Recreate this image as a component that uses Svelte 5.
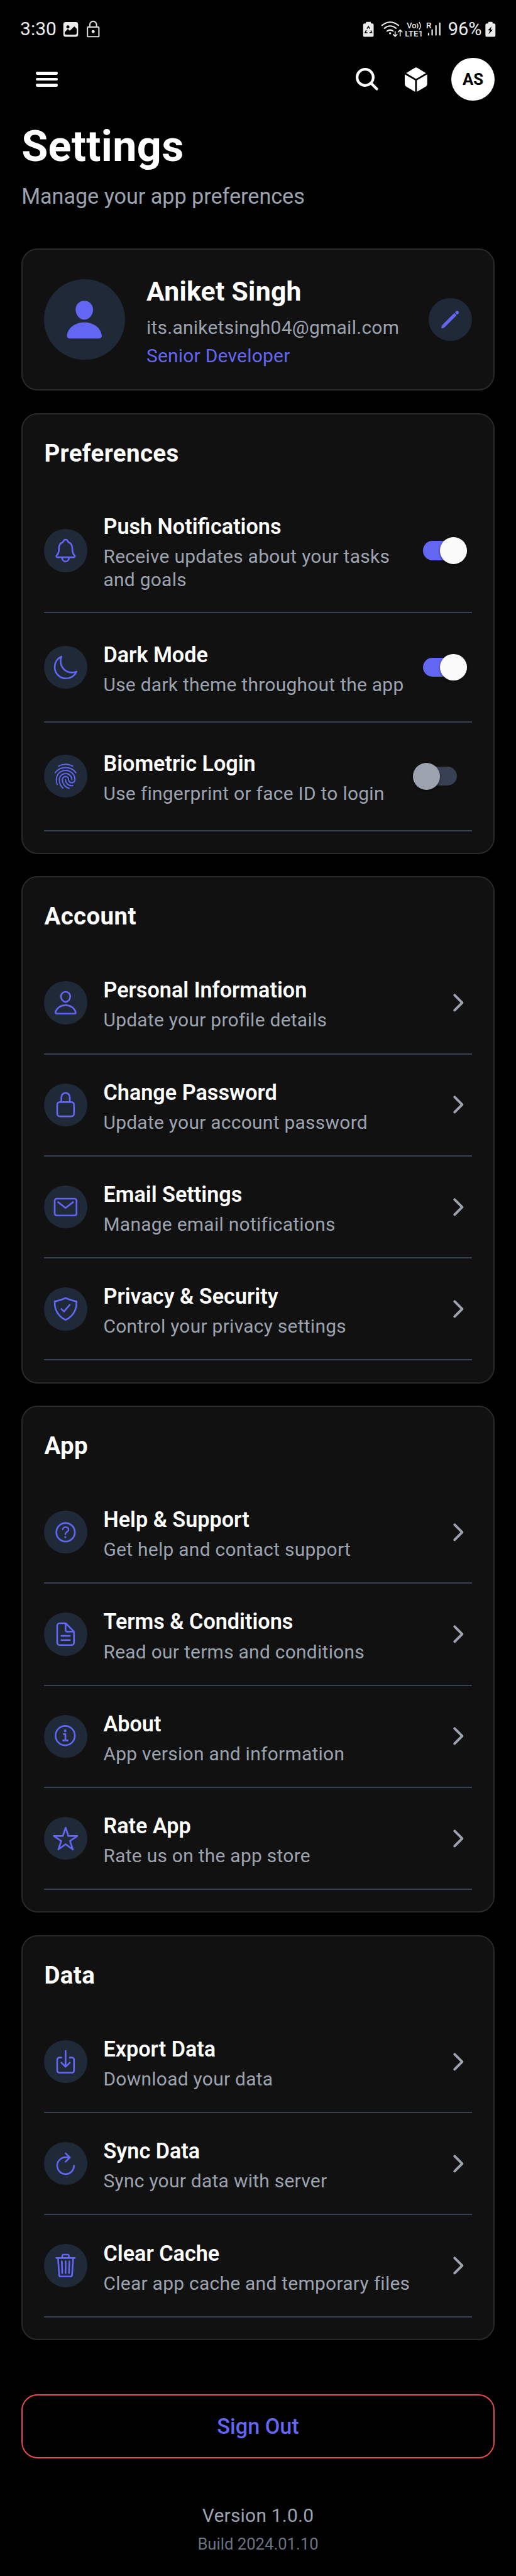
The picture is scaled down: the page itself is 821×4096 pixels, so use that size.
<script>
  const person =
    '<path d="M344 144c-3.92 52.87-44 96-88 96s-84.15-43.12-88-96c-4-55 35-96 88-96s92 42 88 96z"/><path d="M256 304c-87 0-175.3 48-191.64 138.6C62.39 453.52 68.57 464 80 464h352c11.44 0 17.62-10.48 15.65-21.4C431.3 352 343 304 256 304z"/>';
  const icons = {
    bell: '<path d="M427.68 351.43C402 320 383.87 304 383.87 217.35 383.87 138 343.35 109.73 310 96c-4.43-1.82-8.6-6-9.95-10.55C294.2 65.54 277.8 48 256 48s-38.21 17.55-44 37.47c-1.35 4.6-5.52 8.71-9.95 10.53-33.39 13.75-73.87 41.92-73.87 121.35C128.13 304 110 320 84.32 351.43 73.68 364.45 83 384 101.61 384h308.88c18.51 0 27.77-19.61 17.19-32.57zM320 384v16a64 64 0 01-128 0v-16"/>',
    moon: '<path d="M160 136c0-30.62 4.51-61.61 16-88C99.57 81.27 48 159.32 48 248c0 119.29 96.71 216 216 216 88.68 0 166.73-51.57 200-128-26.39 11.49-57.38 16-88 16-119.29 0-216-96.71-216-216z"/>',
    finger:
      '<path fill="currentColor" stroke="none" d="M390.42 75.28a10.45 10.45 0 01-5.32-1.44C340.72 50.08 302.35 40 256.35 40c-45.77 0-89.23 11.28-128.76 33.84C122 77 115.11 74.8 111.87 69a12.4 12.4 0 014.63-16.32A281.81 281.81 0 01256.35 16c49.23 0 92.23 11.28 139.39 36.48a12 12 0 014.85 16.08 11.3 11.3 0 01-10.17 6.72zM59.63 201.28a11.73 11.73 0 01-6.7-2.16 12.26 12.26 0 01-2.78-16.8c22.89-33 52-58.8 86.79-76.92C209.42 68 302.6 67.88 375.29 105.16c34.79 17.88 63.9 43.44 86.78 76.2a12.11 12.11 0 01-2.77 16.8 11.33 11.33 0 01-16.41-2.88c-20.8-29.64-47.15-52.8-78.57-68.88-66.28-34-151.02-34-217.19.24-31.54 16.32-57.89 39.6-78.69 69.24a10.61 10.61 0 01-8.81 5.4zM204.1 491a10.66 10.66 0 01-8.09-3.6C175.9 466.48 165 453 149.55 424c-16-29.52-24.27-65.52-24.27-104.16 0-71.28 59-129.36 131.53-129.36s131.53 58.08 131.53 129.36a11.56 11.56 0 11-23.11 0c0-58.08-48.6-105.36-108.42-105.36S148.39 261.76 148.39 319.84c0 34.56 7.28 66.48 21.14 92.16 14.38 26.88 24.67 38.6 42.78 57.56a12.49 12.49 0 010 17 11.57 11.57 0 01-8.21 4.44zM369.8 446.6c-27.51 0-51.78-7.2-71.66-21.36-34.44-24.08-55.02-63.56-55.02-105.44a11.56 11.56 0 1123.11 0c0 33.84 16.41 65.76 43.92 85.2 16 11.4 34.79 16.92 57.45 16.92a132 132 0 0024.15-2.4c6.24-1.2 12.25 3.12 13.4 9.72a11.9 11.9 0 01-9.36 13.92 144 144 0 01-25.99 3.44zM323.38 496a13 13 0 01-3-.36C283.31 485 259.16 471 234 445.2c-32.48-33.48-50.27-78-50.27-125.4 0-38.76 31.67-70.32 70.74-70.32s70.74 31.56 70.74 70.32c0 25.56 22 46.32 49.12 46.32s49.13-20.76 49.13-46.32c0-90-74.67-163.2-166.56-163.2-65.3 0-125 37.68-151.87 96.12-9 19.44-13.64 42.12-13.64 67.08 0 18.72 1.62 48.12 15.49 86.64a12.07 12.07 0 01-6.94 15.48 11.5 11.5 0 01-14.79-7.32 270 270 0 01-17-94.8c0-28.44 5.2-54.24 15.37-76.8 30.75-66.84 98.94-110.16 173.37-110.16 104.6 0 189.67 83.88 189.67 187.08 0 38.76-32.6 70.32-72.35 70.32S302 358.68 302 319.92c0-25.56-21.27-46.32-47.63-46.32S206.8 294.36 206.8 319.92c0 41 15.26 79.32 43.23 108.12 22 22.56 43 35 75.59 44.28a12.06 12.06 0 018.09 14.64 11.36 11.36 0 01-10.33 9.04z"/>',
    person,
    lock: '<path d="M336 208v-95a80 80 0 00-160 0v95"/><rect x="96" y="208" width="320" height="272" rx="48"/>',
    mail: '<rect x="48" y="96" width="416" height="320" rx="40"/><path d="M112 160l144 112 144-112"/>',
    shield:
      '<path d="M336 176L225.2 304 176 255.8M463.1 112.37C373.68 96.33 336.71 84.45 256 48c-80.71 36.45-117.68 48.33-207.1 64.37C32.7 369.13 240.58 457.79 256 464c15.42-6.21 223.3-94.87 207.1-351.63z"/>',
    help: '<circle cx="256" cy="256" r="176"/><path stroke-width="28" d="M200 202.29s.84-17.5 19.57-32.57C230.68 160.77 244 158.18 256 158c10.93-.14 20.69 1.67 26.53 4.45 10 4.76 29.47 16.38 29.47 41.09 0 26-17 37.81-36.37 50.8S251 281.43 251 296"/><circle cx="250" cy="348" r="20" fill="currentColor" stroke="none"/>',
    document:
      '<path d="M416 221.25V416a48 48 0 01-48 48H144a48 48 0 01-48-48V96a48 48 0 0148-48h98.75a32 32 0 0122.62 9.37l141.26 141.26a32 32 0 019.37 22.62z"/><path d="M256 56v120a32 32 0 0032 32h120M176 288h160M176 368h160"/>',
    info: '<circle cx="248" cy="248" r="184"/><path d="M220 220h32v116M208 340h88"/><circle cx="248" cy="156" r="26" fill="currentColor" stroke="none"/>',
    star: '<path d="M480 208H308L256 48l-52 160H32l140 96-54 160 138-100 138 100-54-160z"/>',
    download:
      '<path d="M336 176h40a40 40 0 0140 40v208a40 40 0 01-40 40H136a40 40 0 01-40-40V216a40 40 0 0140-40h40M176 272l80 80 80-80M256 48v288"/>',
    refresh: '<path d="M320 146s24.36-12-64-12a160 160 0 10160 160M256 58l80 80-80 80"/>',
    trash:
      '<path d="M112 112l20 320c.95 18.49 14.4 32 32 32h184c17.67 0 30.87-13.51 32-32l20-320M80 112h352M192 112V72a23.93 23.93 0 0124-24h80a23.93 23.93 0 0124 24v40M256 176v224M184 176l8 224M328 176l-8 224"/>'
  };

  let preferences = $state([
    { icon: 'bell', title: 'Push Notifications', text: 'Receive updates about your tasks\nand goals', on: true },
    { icon: 'moon', title: 'Dark Mode', text: 'Use dark theme throughout the app', on: true },
    { icon: 'finger', title: 'Biometric Login', text: 'Use fingerprint or face ID to login', on: false }
  ]);

  const sections = [
    {
      name: 'Account',
      rows: [
        { icon: 'person', title: 'Personal Information', text: 'Update your profile details' },
        { icon: 'lock', title: 'Change Password', text: 'Update your account password' },
        { icon: 'mail', title: 'Email Settings', text: 'Manage email notifications' },
        { icon: 'shield', title: 'Privacy & Security', text: 'Control your privacy settings' }
      ]
    },
    {
      name: 'App',
      rows: [
        { icon: 'help', title: 'Help & Support', text: 'Get help and contact support' },
        { icon: 'document', title: 'Terms & Conditions', text: 'Read our terms and conditions' },
        { icon: 'info', title: 'About', text: 'App version and information' },
        { icon: 'star', title: 'Rate App', text: 'Rate us on the app store' }
      ]
    },
    {
      name: 'Data',
      rows: [
        { icon: 'download', title: 'Export Data', text: 'Download your data' },
        { icon: 'refresh', title: 'Sync Data', text: 'Sync your data with server' },
        { icon: 'trash', title: 'Clear Cache', text: 'Clear app cache and temporary files' }
      ]
    }
  ];
</script>

{#snippet rowLead(row)}
  <span class="badge">
    <svg class="outline" viewBox="0 0 512 512">{@html icons[row.icon]}</svg>
  </span>
  <div class="copy">
    <div class="row-title">{row.title}</div>
    <div class="row-text">{row.text}</div>
  </div>
{/snippet}

<div class="page">
  <div class="status">
    <span class="clock">3:30</span>
    <svg class="s-left" viewBox="132 42 78 38">
      <rect x="133" y="46" width="31" height="31" rx="5" fill="#ececec" />
      <circle cx="142.6" cy="56" r="3.3" fill="#000" />
      <path d="M136 71v-4l6.5-6.5 4 4 9.500-9.500 5 5v8.500q0 4-4 4h-17q-4 0-4-1.500z" fill="#000" />
      <rect x="183.500" y="56.500" width="24" height="20" rx="1" fill="none" stroke="#d8d8d8" stroke-width="2.800" />
      <path d="M188.500 56v-4.500a7 7 0 0114 0V56" fill="none" stroke="#d8d8d8" stroke-width="2.800" />
      <circle cx="195.500" cy="66" r="3.200" fill="#ececec" />
    </svg>
    <svg class="s-right" viewBox="760 42 280 38">
      <g fill="#ececec">
        <path d="M768 45.500h8a1 1 0 011 1V49h2.500a3.500 3.500 0 013.500 3.500v21a3.500 3.500 0 01-3.500 3.500h-15a3.500 3.500 0 01-3.500-3.500v-21A3.500 3.500 0 01764.500 49h2.500v-2.500a1 1 0 011-1z" />
        <path d="M1024 45.500h7a1 1 0 011 1V49h2.500a3.500 3.500 0 013.500 3.500v21a3.500 3.500 0 01-3.500 3.500h-14a3.500 3.500 0 01-3.500-3.500v-21a3.500 3.500 0 013.500-3.500h2.500v-2.500a1 1 0 011-1z" />
        <circle cx="817.500" cy="69.500" r="2.200" />
      </g>
      <path d="M1030 55l-8 8.500h4.500l-3 8 9-9.500h-4.500z" fill="#000" />
      <g fill="none" stroke="#111" stroke-width="2.100">
        <path d="M769 60l3-4.500 3 4.500M777 63.500l2 4.500h-4.500M770 68.500h-5l2.500-5.500" />
      </g>
      <g fill="none" stroke="#ececec" stroke-linecap="round">
        <path stroke-width="2.700" d="M800.500 53q17-13.500 34.500 0M805.500 59q12-9.500 24.500 0M811 65q6.500-5 13 0" />
        <path stroke-width="2.200" d="M828 66v9.500M824 72l4 4 4-4M838.500 75v-12M834.500 66.500l4-4 4 4" />
        <path stroke-width="1.900" d="M874 49.500q3.500 4.500 0 9.500M878.500 47q5.500 7 0 14" />
        <path stroke-width="2.900" d="M898 70v3M905.500 62.500v10.500M913.500 54v19M921.500 48.500v24.500" />
      </g>
      <g class="s-text">
        <text x="852.500" y="59" font-size="16.500" textLength="20" lengthAdjust="spacingAndGlyphs">Vo</text>
        <text x="848.500" y="75.800" font-size="17.500" textLength="38" lengthAdjust="spacingAndGlyphs">LTE1</text>
        <text x="892.800" y="58.800" font-size="18">R</text>
        <text class="pct" x="938.500" y="73.800" font-size="38.500" textLength="71" lengthAdjust="spacingAndGlyphs">96%</text>
      </g>
    </svg>
  </div>

  <header>
    <button class="menu" aria-label="Menu"><i></i><i></i><i></i></button>
    <svg class="search" viewBox="48 48 416 416">
      <path d="M456.690 421.390L362.600 327.300a173.810 173.810 0 0034.840-104.580C397.440 126.380 319.060 48 222.720 48S48 126.380 48 222.720s78.380 174.720 174.720 174.720A173.810 173.810 0 00327.300 362.600l94.090 94.090a25 25 0 0035.300-35.300zM97.920 222.720a124.800 124.800 0 11124.800 124.800 124.950 124.950 0 01-124.800-124.800z" />
    </svg>
    <svg class="cube" viewBox="444 360 141 154">
      <path d="M508 362.500q7-3 14 0L577 396.500 515 433 453 396.500zM444 404l65 38v71.500L452 480q-8-5-8-13zM585 404l-65 38v71.500L577 480q8-5 8-13z" />
    </svg>
    <div class="initials">AS</div>
  </header>

  <h1>Settings</h1>
  <p class="lead">Manage your app preferences</p>

  <main>
    <section class="card profile">
      <div class="avatar">
        <svg viewBox="0 0 512 512"><path d="M332.640 64.580C313.180 43.570 286 32 256 32c-30.160 0-57.430 11.500-76.800 32.380-19.580 21.110-29.120 49.800-26.880 80.780C156.760 206.280 203.270 256 256 256s99.160-49.710 103.670-110.820c2.270-30.700-7.330-59.330-27.030-80.600zM432 480H80a31 31 0 01-24.200-11.130c-6.500-7.770-9.120-18.380-7.180-29.110C57.060 392.940 83.400 353.610 124.800 326c36.780-24.510 83.370-38 131.200-38s94.420 13.500 131.200 38c41.400 27.600 67.740 66.930 76.180 113.750 1.940 10.730-.68 21.340-7.180 29.110A31 31 0 01432 480z" /></svg>
      </div>
      <div class="who">
        <div class="name">Aniket Singh</div>
        <div class="mail">its.aniketsingh04@gmail.com</div>
        <div class="role">Senior Developer</div>
      </div>
      <button class="badge edit" aria-label="Edit profile">
        <svg class="outline" viewBox="0 0 512 512"><path d="M358.620 129.280L86.490 402.080 70 442l39.920-16.490 272.800-272.130-24.100-24.100zM413.070 74.840l-11.790 11.780 24.100 24.100 11.790-11.790a16.510 16.510 0 000-23.340l-.75-.75a16.510 16.510 0 00-23.350 0z" /></svg>
      </button>
    </section>

    <section class="card">
      <h2>Preferences</h2>
      {#each preferences as row}
        <div class="row pref" class:tall={row.text.includes('\n')}>
          {@render rowLead(row)}
          <button class="switch" class:on={row.on} role="switch" aria-checked={row.on} aria-label={row.title} onclick={() => (row.on = !row.on)}><i></i></button>
        </div>
      {/each}
    </section>

    {#each sections as section}
      <section class="card">
        <h2>{section.name}</h2>
        {#each section.rows as row}
          <div class="row">
            {@render rowLead(row)}
            <svg class="chevron" viewBox="0 0 512 512"><path d="M184 112l144 144-144 144" /></svg>
          </div>
        {/each}
      </section>
    {/each}
  </main>

  <button class="signout">Sign Out</button>
  <footer>
    <div class="version">Version 1.0.0</div>
    <div class="build">Build 2024.01.10</div>
  </footer>
</div>

<style>
  /* 1rem is ten units of a 384-unit wide screen */
  :global(html) {
    font-size: 21.38px;
  }
  :global(body) {
    background: #000;
    margin: 0;
  }
  .page {
    box-sizing: border-box;
    width: 100%;
    height: 4096px;
    overflow: hidden;
    background: #000;
    color: #fff;
    font-family: Roboto, sans-serif;
    padding: 0 1.6rem;
    display: flex;
    flex-direction: column;
  }
  .page > * {
    flex: none;
  }
  button {
    font: inherit;
    border: 0;
    padding: 0;
    background: none;
    color: inherit;
  }
  svg {
    display: block;
    flex: none;
    overflow: visible;
  }
  .status {
    display: flex;
    align-items: center;
    height: 1.352rem;
    margin: 1.493rem -0.16rem 0 -0.1rem;
    color: #ececec;
  }
  .clock {
    font-size: 1.4rem;
    line-height: 1.352rem;
    width: 3.19rem;
    white-space: nowrap;
  }
  .s-left {
    width: 2.773rem;
    height: 1.351rem;
  }
  .s-right {
    width: 9.956rem;
    height: 1.351rem;
    margin-left: auto;
  }
  .s-text {
    fill: #ececec;
    font-family: Roboto, sans-serif;
    font-weight: 500;
  }
  .pct {
    font-weight: 400;
  }
  header {
    display: flex;
    align-items: center;
    height: 3.2rem;
    margin-top: 1.457rem;
    padding-left: 1.05rem;
  }
  .menu {
    width: 1.67rem;
    display: flex;
    flex-direction: column;
    gap: 0.237rem;
    margin-right: auto;
  }
  .menu i {
    height: 0.213rem;
    border-radius: 0.1rem;
    background: #fff;
  }
  .search {
    width: 1.671rem;
    height: 1.671rem;
    fill: #fff;
  }
  .cube {
    width: 1.671rem;
    height: 1.825rem;
    margin: 0 1.813rem 0 1.955rem;
    fill: #fff;
  }
  .initials {
    width: 3.2rem;
    height: 3.2rem;
    border-radius: 50%;
    background: #fff;
    color: #000;
    font-size: 1.2rem;
    font-weight: 700;
    line-height: 3.25rem;
    text-align: center;
  }
  h1 {
    margin: 1.53rem 0 0;
    font-size: 3.2rem;
    line-height: 3.8rem;
    font-weight: 700;
    letter-spacing: 0.3px;
  }
  .lead {
    margin: 0.79rem 0 0;
    font-size: 1.6rem;
    line-height: 2rem;
    letter-spacing: -0.04px;
    color: #9ca3af;
  }
  main {
    display: flex;
    flex-direction: column;
    gap: 1.66rem;
    margin-top: 2.87rem;
  }
  .card {
    box-sizing: border-box;
    border: 0.1rem solid #2a2a2a;
    border-radius: 1.2rem;
    background: #111;
    padding: 1.78rem 1.6rem 1.6rem;
  }
  .profile {
    display: flex;
    align-items: center;
    height: 10.56rem;
    padding: 0 1.6rem;
  }
  .avatar {
    display: grid;
    place-items: center;
    width: 6rem;
    height: 6rem;
    border-radius: 50%;
    background: #1f2937;
  }
  .avatar svg {
    width: 3.2rem;
    height: 3.2rem;
    fill: #6366f1;
  }
  .who {
    flex: 1;
    padding: 0.3rem 0 0 1.6rem;
    white-space: nowrap;
  }
  .name {
    font-size: 2rem;
    line-height: 2.4rem;
    font-weight: 700;
    letter-spacing: 0.25px;
  }
  .mail {
    margin-top: 0.59rem;
    font-size: 1.4rem;
    line-height: 1.8rem;
    letter-spacing: 0.28px;
    color: #9ca3af;
  }
  .role {
    margin-top: 0.3rem;
    font-size: 1.4rem;
    line-height: 1.8rem;
    letter-spacing: 0.25px;
    color: #6366f1;
  }
  h2 {
    margin: 0 0 1.58rem;
    font-size: 1.8rem;
    line-height: 2.2rem;
    font-weight: 700;
    letter-spacing: 0.38px;
  }
  .row {
    box-sizing: border-box;
    display: flex;
    align-items: center;
    height: 7.592rem;
    border-bottom: 0.1rem solid #374151;
  }
  .pref {
    height: 8.1rem;
  }
  .pref.tall {
    height: 9.26rem;
  }
  .badge {
    display: grid;
    place-items: center;
    flex: none;
    width: 3.2rem;
    height: 3.2rem;
    border-radius: 50%;
    background: #1f2937;
    color: #6366f1;
  }
  .outline {
    width: 2rem;
    height: 2rem;
    fill: none;
    stroke: currentColor;
    stroke-width: 32;
    stroke-linecap: round;
    stroke-linejoin: round;
  }
  .edit .outline {
    width: 1.6rem;
    height: 1.6rem;
    fill: currentColor;
    stroke-width: 44;
  }
  .copy {
    flex: 1;
    padding: 0.25rem 0 0 1.2rem;
  }
  .row-title {
    font-size: 1.6rem;
    line-height: 2rem;
    font-weight: 600;
    white-space: nowrap;
  }
  .row-text {
    margin-top: 0.39rem;
    font-size: 1.4rem;
    line-height: 1.7rem;
    letter-spacing: 0.28px;
    white-space: pre;
    color: #9ca3af;
  }
  .chevron {
    width: 2rem;
    height: 2rem;
    fill: none;
    stroke: #9ca3af;
    stroke-width: 48;
    stroke-linecap: round;
    stroke-linejoin: round;
  }
  .switch {
    display: flex;
    align-items: center;
    width: 3.25rem;
    height: 1.42rem;
    margin-right: 1.11rem;
    border-radius: 0.71rem;
    background: #374151;
  }
  .switch i {
    flex: none;
    width: 2rem;
    height: 2rem;
    border-radius: 50%;
    background: #9ca3af;
    box-shadow: 0 0.08rem 0.15rem rgba(0, 0, 0, 0.5);
  }
  .switch.on {
    margin-right: 0.36rem;
    justify-content: flex-end;
    background: #6366f1;
  }
  .switch.on i {
    background: #fafafa;
  }
  .signout {
    box-sizing: border-box;
    height: 4.78rem;
    margin-top: 4.02rem;
    border: 0.1rem solid #e24b4b;
    border-radius: 1.2rem;
    color: #6366f1;
    font-size: 1.6rem;
    font-weight: 500;
    text-align: center;
  }
  footer {
    margin-top: 3.35rem;
    text-align: center;
  }
  .version {
    font-size: 1.4rem;
    line-height: 1.8rem;
    letter-spacing: 0.23px;
    color: #9ca3af;
  }
  .build {
    margin-top: 0.43rem;
    font-size: 1.2rem;
    line-height: 1.6rem;
    color: #6b7280;
  }
</style>
